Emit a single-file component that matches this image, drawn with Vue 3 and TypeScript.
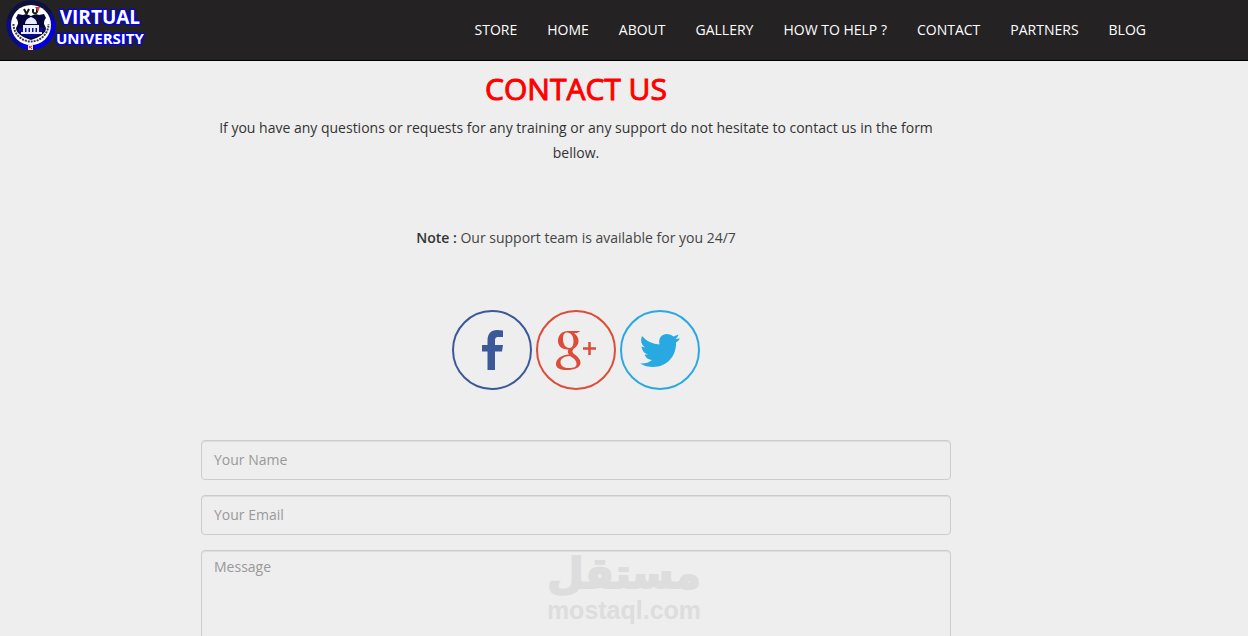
<script setup lang="ts">
import { ref } from 'vue'

const links: string[] = ['Store', 'Home', 'About', 'Gallery', 'How to help ?', 'Contact', 'Partners', 'Blog']
const name = ref('')
const email = ref('')
const message = ref('')
</script>

<template>
  <div class="page">
    <header class="navbar">
      <a class="brand" href="#" aria-label="Virtual University">
        <svg class="crest" viewBox="0 0 50 50" aria-hidden="true">
          <circle cx="25" cy="25" r="24.500" fill="#0a0a8c" />
          <path d="M49 20A24.500 24.500 0 0 1 12 46L16 42A20 20 0 0 0 44 20Z" fill="#0000e6" />
          <path d="M1 20A24.500 24.500 0 0 1 46 12L41 16A20 20 0 0 0 8 18Z" fill="#10103c" />
          <circle cx="25" cy="25" r="20" fill="#fff" />
          <path d="M7.500 24A17.500 17.500 0 0 0 42.500 24" fill="none" stroke="#33334a" stroke-width="2" stroke-dasharray="2 1" />
          <path d="M12 14L17 15Q20 13 25 16Q30 13 33 15L38 14L40 18Q36 22 40 28Q40 35 25 40Q10 35 10 28Q14 22 10 18Z" fill="#05053c" />
          <path d="M14 28Q25 24 38 28Q38 34 25 38Q12 34 12 28Z" fill="#0a0a96" />
          <path d="M18 9L20.500 14L23 9M27 9V12Q29 15 31 12V9" fill="none" stroke="#171717" stroke-width="2" />
          <path d="M29 7H34L32 12Z" fill="#e43535" />
          <path d="M19 24Q19 19 25 17Q31 19 31 24ZM17 25H33V28H17ZM15 32H36V34H15Z" fill="#e6ebff" />
          <path d="M18 28V33M21.500 28V33M25 28V33M28.500 28V33M32 28V33" stroke="#e6ebff" stroke-width="2" />
          <rect x="22" y="45" width="5" height="5" fill="#f4dcdc" />
          <path d="M23 46L26 49M26 46L23 48" stroke="#e32b2b" />
        </svg>
        <span class="brand-name"><span class="brand-top">VIRTUAL</span><span class="brand-bottom">UNIVERSITY</span></span>
      </a>
      <nav class="menu" aria-label="Main">
        <a v-for="link in links" :key="link" href="#">{{ link }}</a>
      </nav>
    </header>

    <main class="contact">
      <h1>CONTACT US</h1>
      <p class="intro">If you have any questions or requests for any training or any support do not hesitate to contact us in the form bellow.</p>
      <p class="note"><strong>Note :</strong> Our support team is available for you 24/7</p>

      <div class="social">
        <a class="facebook" href="#" aria-label="Facebook">
          <svg viewBox="0 0 80 80"><path d="M51 20.500V27H46.500C43.500 27 43 28.500 43 31V35H51L50 41.500H43V60H35.500V41.500H30V35H35.500V31C35.500 23.500 39 20 45 20Z" fill="currentColor" /></svg>
        </a>
        <a class="google" href="#" aria-label="Google Plus">
          <svg viewBox="0 0 80 80">
            <path fill="currentColor" fill-rule="evenodd" d="M32 21H44.500L41 23H38C41 25 42.500 28 42.500 31C42.500 35 40 37 37.500 39C36 41 36 42 38 44C42 47 44.500 49 44.500 53C44.500 57.500 38 60 31 60C24 60 20 58 20 54C20 49 25 45 33 44.500C31.500 43 31.500 41 32.500 39.500C26 40 22 36 22 31C22 25 26 21 32 21ZM31 22.500C28 22.500 27 25 27 29C27 34 29.500 38 33.500 38C36.500 38 37.500 35 37.500 31C37.500 26 35 22.500 31 22.500ZM34 46C28 46 24.500 49 24.500 52C24.500 56 28 58 33 58C38 58 40.500 57 40.500 54C40.500 50 37 48 34 46Z" />
            <path d="M47 38.500H60M53.500 32V45" stroke="currentColor" stroke-width="2.500" />
          </svg>
        </a>
        <a class="twitter" href="#" aria-label="Twitter">
          <svg viewBox="0 0 80 80"><path d="M60 28.500Q58.500 31 56 32.500C56.500 46 47 57 33 57Q26 57 20 53.500Q27 54 32 50Q26.500 49.500 24.500 44.500H28Q22 42.500 21.500 36.500L25 37.500Q19 33 22 26Q29 34 39.500 34.500C38 28 42 24 47 24Q51 24 53.500 26.500L58.500 24.500Q58 27 55.500 29Z" fill="currentColor" /></svg>
        </a>
      </div>

      <form class="form" @submit.prevent>
        <input v-model="name" type="text" aria-label="Your Name" placeholder="Your Name" />
        <input v-model="email" type="email" aria-label="Your Email" placeholder="Your Email" />
        <textarea v-model="message" aria-label="Message" placeholder="Message" rows="4"></textarea>
      </form>
    </main>

    <div class="watermark">
      <span class="watermark-ar" lang="ar" dir="rtl">مستقل</span>
      <span class="watermark-en">mostaql.com</span>
    </div>
  </div>
</template>

<style>
body {
  margin: 0;
  background: #eee;
}
</style>

<style scoped>
.page {
  position: relative;
  height: 100vh;
  overflow: hidden;
  background: #eee;
  color: #444;
  font: 400 14px/25px "Open Sans", "Noto Sans", sans-serif;
}

.navbar {
  display: flex;
  justify-content: space-between;
  align-items: flex-start;
  height: 60px;
  padding: 0 87px 0 6px;
  background: #252223;
  border-bottom: 1px solid #000;
}

.brand {
  display: flex;
  color: #fff;
  text-decoration: none;
}

.crest {
  width: 50px;
  height: 50px;
}

.brand-name {
  display: flex;
  flex-direction: column;
  align-items: center;
  padding-top: 7px;
  font-weight: 700;
  text-shadow: 1px 1px 1px #00f, -1px 1px 1px #00f, 1px -1px 1px #00f, -1px -1px 1px #00f, 0 0 2px #00f, 0 0 2px #00f;
}

.brand-top {
  font-size: 19px;
  line-height: 20px;
}

.brand-bottom {
  font-size: 15px;
  line-height: 22px;
}

.menu {
  display: flex;
}

.menu a {
  padding: 20px 15px;
  color: #fff;
  line-height: 20px;
  text-decoration: none;
  text-transform: uppercase;
  white-space: nowrap;
}

.contact {
  max-width: 750px;
  margin-left: 201px;
  text-align: center;
}

h1 {
  margin: 0;
  padding: 11px 0 10px;
  color: #f00;
  font-size: 30px;
  font-weight: 400;
  line-height: 33px;
  -webkit-text-stroke: 1px #f00;
}

p {
  margin: 0;
}

.intro {
  color: #333;
}

.note {
  margin-top: 60px;
}

strong {
  color: #333;
  font-weight: 600;
}

.social {
  display: flex;
  justify-content: center;
  gap: 4px;
  margin-top: 60px;
}

.social a {
  box-sizing: border-box;
  width: 80px;
  height: 80px;
  border: 2px solid currentColor;
  border-radius: 50%;
}

.social svg {
  display: block;
  width: 80px;
  height: 80px;
  margin: -2px;
}

.social .facebook {
  color: #3b5998;
}

.social .google {
  color: #dd4b39;
}

.social .twitter {
  color: #29a9e1;
}

.form {
  display: flex;
  flex-direction: column;
  gap: 15px;
  margin-top: 50px;
}

input,
textarea {
  box-sizing: border-box;
  width: 100%;
  height: 40px;
  margin: 0;
  padding: 6px 12px;
  border: 1px solid #ccc;
  border-radius: 4px;
  background: transparent;
  box-shadow: inset 0 1px 1px rgba(0, 0, 0, 0.075);
  color: #555;
  font: 400 14px/20px "Open Sans", "Noto Sans", sans-serif;
}

input {
  padding-bottom: 8px;
}

textarea {
  height: 160px;
  resize: none;
}

input::placeholder,
textarea::placeholder {
  color: #999;
}

.watermark {
  position: absolute;
  right: 0;
  bottom: 12px;
  left: 0;
  display: flex;
  flex-direction: column;
  align-items: center;
  color: #ddd;
  font-weight: 700;
  pointer-events: none;
}

.watermark-ar {
  font-family: "DejaVu Sans", sans-serif;
  font-size: 42px;
  line-height: 44px;
  -webkit-text-stroke: 2px #ddd;
}

.watermark-en {
  font-family: "Liberation Sans", Arial, sans-serif;
  font-size: 25px;
  line-height: 28px;
}
</style>
